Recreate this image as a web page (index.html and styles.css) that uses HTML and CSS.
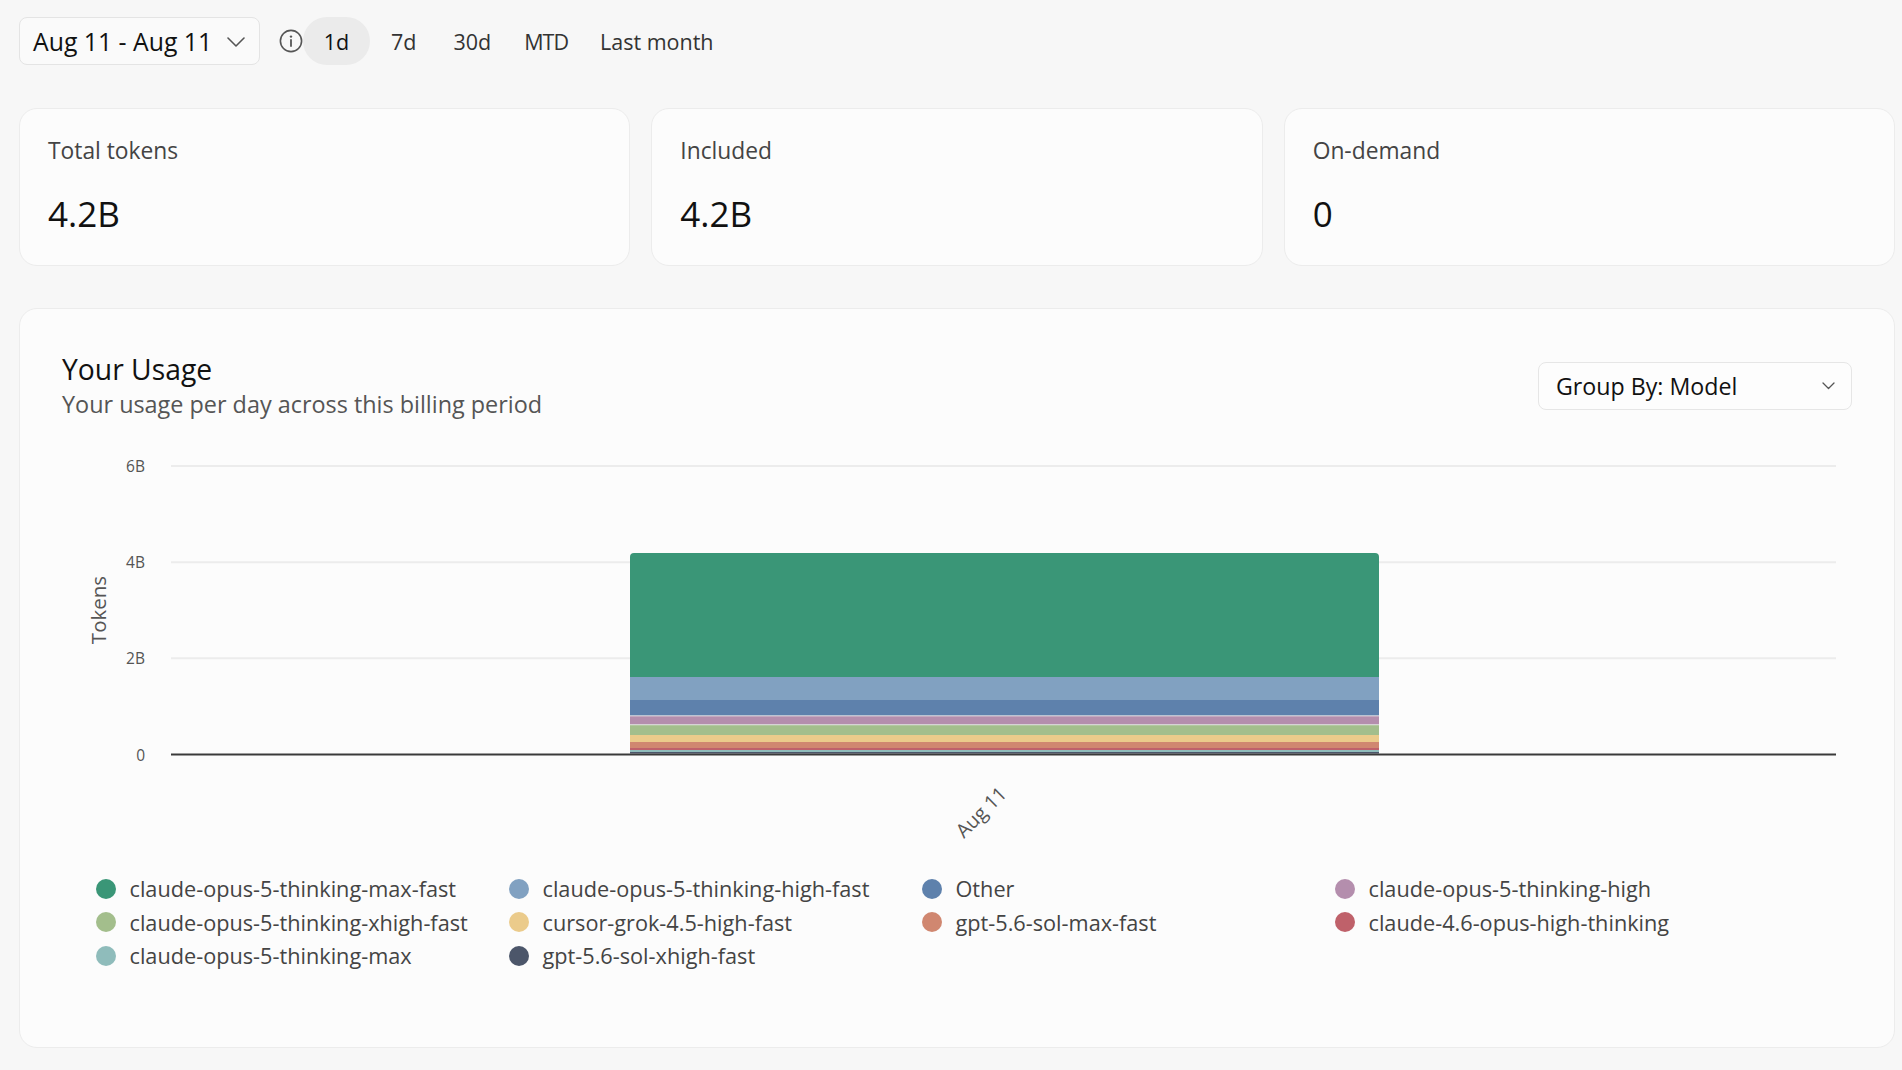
FILE: index.html
```html
<!DOCTYPE html>
<html lang="en">
<head>
<meta charset="utf-8">
<title>Usage</title>
<link rel="stylesheet" href="styles.css">
</head>
<body>
<div class="page">
  <div class="toolbar">
    <div class="date-select">
      <span>Aug 11 - Aug 11</span>
      <svg class="chev" width="18" height="10" viewBox="0 0 18 10"><path d="M1 1 L9 9 L17 1" fill="none" stroke="#555" stroke-width="1.6" stroke-linecap="round" stroke-linejoin="round"/></svg>
    </div>
    <svg class="info" width="24" height="24" viewBox="0 0 24 24"><circle cx="12" cy="12" r="10.6" fill="none" stroke="#555" stroke-width="1.6"/><circle cx="12" cy="7.6" r="1.2" fill="#555"/><path d="M12 11 V17" stroke="#555" stroke-width="1.8" stroke-linecap="round"/></svg>
    <div class="pills">
      <span class="pill active">1d</span>
      <span class="pill">7d</span>
      <span class="pill">30d</span>
      <span class="pill narrow">MTD</span>
      <span class="pill">Last month</span>
    </div>
  </div>

  <div class="stats">
    <div class="stat card">
      <div class="stat-label">Total tokens</div>
      <div class="stat-value">4.2B</div>
    </div>
    <div class="stat card">
      <div class="stat-label">Included</div>
      <div class="stat-value">4.2B</div>
    </div>
    <div class="stat card">
      <div class="stat-label">On-demand</div>
      <div class="stat-value">0</div>
    </div>
  </div>

  <div class="usage card">
    <div class="usage-head">
      <div>
        <div class="usage-title">Your Usage</div>
        <div class="usage-sub">Your usage per day across this billing period</div>
      </div>
      <div class="group-select">
        <span>Group By: Model</span>
        <svg width="13" height="8" viewBox="0 0 13 8"><path d="M1 1 L6.5 6.5 L12 1" fill="none" stroke="#555" stroke-width="1.3" stroke-linecap="round" stroke-linejoin="round"/></svg>
      </div>
    </div>

    <svg class="chart" width="1790" height="442" viewBox="0 0 1790 442">
      <g class="grid">
        <line x1="109" y1="36" x2="1774" y2="36"/>
        <line x1="109" y1="132.2" x2="1774" y2="132.2"/>
        <line x1="109" y1="228.3" x2="1774" y2="228.3"/>
      </g>
      <g class="ticks">
        <text x="83" y="36">6B</text>
        <text x="83" y="132.2">4B</text>
        <text x="83" y="228.3">2B</text>
        <text x="83" y="324.5">0</text>
      </g>
      <text class="ylabel" x="36" y="180" transform="rotate(-90 36 180)">Tokens</text>
      <g class="bar">
        <path d="M568 247 V127 Q568 123 572 123 H1313 Q1317 123 1317 127 V247 Z" fill="#3a9677"/>
        <rect x="568" y="247" width="749" height="23" fill="#81a1c1"/>
        <rect x="568" y="270" width="749" height="15.5" fill="#5e81ac"/>
        <rect x="568" y="285.5" width="749" height="0.8" fill="#c9c9d2"/>
        <rect x="568" y="286.3" width="749" height="8" fill="#b48ead"/>
        <rect x="568" y="294.3" width="749" height="0.9" fill="#cfcfcf"/>
        <rect x="568" y="295.2" width="749" height="9.8" fill="#a3be8c"/>
        <rect x="568" y="305" width="749" height="7" fill="#ebcb8b"/>
        <rect x="568" y="312" width="749" height="6" fill="#d08770"/>
        <rect x="568" y="318" width="749" height="2" fill="#bf616a"/>
        <rect x="568" y="320" width="749" height="2" fill="#8fbcbb"/>
        <rect x="568" y="322" width="749" height="1.6" fill="#4c566a"/>
      </g>
      <line class="axis" x1="109" y1="324.5" x2="1774" y2="324.5"/>
      <text class="xtick" x="946" y="365" transform="rotate(-45 946 365)">Aug 11</text>
    </svg>

    <div class="legend">
      <div class="legend-col">
        <div class="legend-item"><span class="dot" style="background:#3a9677"></span>claude-opus-5-thinking-max-fast</div>
        <div class="legend-item"><span class="dot" style="background:#a3be8c"></span>claude-opus-5-thinking-xhigh-fast</div>
        <div class="legend-item"><span class="dot" style="background:#8fbcbb"></span>claude-opus-5-thinking-max</div>
      </div>
      <div class="legend-col">
        <div class="legend-item"><span class="dot" style="background:#81a1c1"></span>claude-opus-5-thinking-high-fast</div>
        <div class="legend-item"><span class="dot" style="background:#ebcb8b"></span>cursor-grok-4.5-high-fast</div>
        <div class="legend-item"><span class="dot" style="background:#4c566a"></span>gpt-5.6-sol-xhigh-fast</div>
      </div>
      <div class="legend-col">
        <div class="legend-item"><span class="dot" style="background:#5e81ac"></span>Other</div>
        <div class="legend-item"><span class="dot" style="background:#d08770"></span>gpt-5.6-sol-max-fast</div>
      </div>
      <div class="legend-col">
        <div class="legend-item"><span class="dot" style="background:#b48ead"></span>claude-opus-5-thinking-high</div>
        <div class="legend-item"><span class="dot" style="background:#bf616a"></span>claude-4.6-opus-high-thinking</div>
      </div>
    </div>
  </div>
</div>
</body>
</html>
```

FILE: styles.css
```css
* { box-sizing: border-box; }

html, body {
  margin: 0;
  padding: 0;
  background: #f7f7f7;
  font-family: "Open Sans", "Noto Sans", sans-serif;
  color: #1a1a1a;
}

.page {
  padding: 17px 7px 21px 19px;
}

/* toolbar */
.toolbar {
  display: flex;
  align-items: center;
  height: 48px;
}

.date-select {
  width: 241px;
  height: 48px;
  display: flex;
  align-items: center;
  justify-content: space-between;
  padding: 0 14px 0 13px;
  border: 1px solid #e4e4e4;
  border-radius: 8px;
  background: #fafafa;
  font-size: 24.8px;
  color: #111;
  white-space: nowrap;
}

.date-select .chev { margin-top: 2px; }

.info {
  margin-left: 19px;
  flex: none;
}

.pills {
  display: flex;
  align-items: center;
  gap: 5px;
}

.pill {
  height: 48px;
  display: flex;
  align-items: center;
  padding: 0 16px;
  border-radius: 24px;
  font-size: 21.5px;
  color: #333;
  white-space: nowrap;
}

.pill.narrow {
  letter-spacing: -1px;
  padding: 0 11px 0 12px;
}

.pill.active {
  width: 67px;
  justify-content: center;
  padding: 0;
  background: #ebebeb;
  color: #111;
}

/* cards */
.card {
  background: #fcfcfc;
  border: 1px solid #ececec;
  border-radius: 18px;
}

.stats {
  margin-top: 43px;
  display: grid;
  grid-template-columns: repeat(3, 1fr);
  gap: 21px;
}

.stat {
  height: 158px;
  padding: 27px 28px 0;
}

.stat-label {
  font-size: 22.8px;
  line-height: 30px;
  color: #444;
}

.stat-value {
  margin-top: 27px;
  font-size: 35px;
  line-height: 42px;
  color: #111;
}

/* usage */
.usage {
  margin-top: 42px;
  padding: 44px 42px 74px 42px;
}

.usage-head {
  display: flex;
  align-items: center;
  justify-content: space-between;
}

.usage-title {
  font-size: 28.3px;
  line-height: 1.2;
  color: #111;
}

.usage-sub {
  margin-top: 3px;
  font-size: 23.4px;
  line-height: 1.25;
  color: #555;
}

.group-select {
  width: 314px;
  height: 48px;
  display: flex;
  align-items: center;
  justify-content: space-between;
  padding: 0 16px 0 17px;
  border: 1px solid #e6e6e6;
  border-radius: 8px;
  background: #fdfdfd;
  font-size: 23.2px;
  color: #111;
}

.chart {
  display: block;
  margin-top: 11px;
  overflow: visible;
}

.grid line {
  stroke: #ececec;
  stroke-width: 2;
}

.axis {
  stroke: #3a3a3a;
  stroke-width: 2;
}

.ticks text {
  font-family: "Open Sans", sans-serif;
  font-size: 15.5px;
  fill: #555;
  text-anchor: end;
  dominant-baseline: central;
}

.ylabel {
  font-family: "Open Sans", sans-serif;
  font-size: 20.5px;
  fill: #555;
  text-anchor: middle;
  dominant-baseline: central;
}

.xtick {
  font-family: "Open Sans", sans-serif;
  font-size: 19.5px;
  fill: #555;
  text-anchor: end;
}

/* legend */
.legend {
  margin-left: 34px;
  display: grid;
  grid-template-columns: repeat(4, 413px);
}

.legend-col {
  display: flex;
  flex-direction: column;
}

.legend-item {
  height: 33.5px;
  display: flex;
  align-items: center;
  font-size: 21.7px;
  color: #444;
  white-space: nowrap;
}

.dot {
  width: 20px;
  height: 20px;
  border-radius: 50%;
  margin-right: 13.5px;
  flex: none;
}
```
